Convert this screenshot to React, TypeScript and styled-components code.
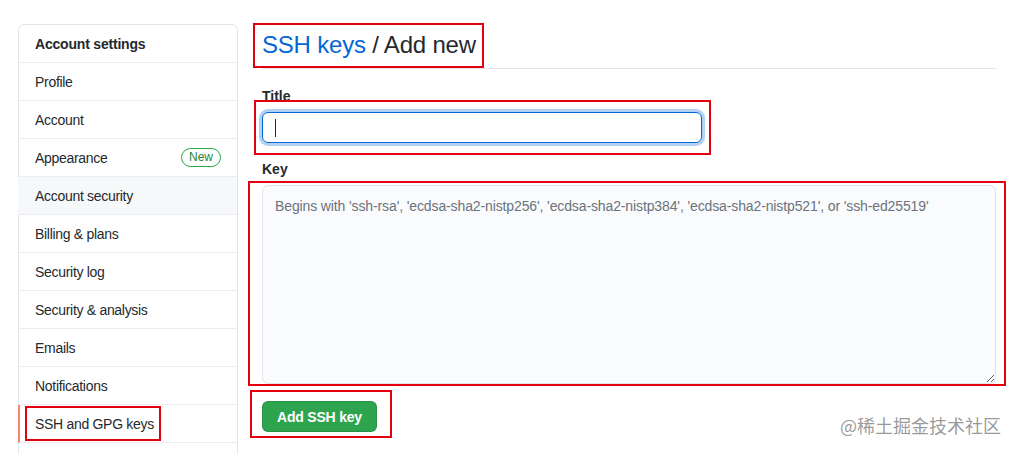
import React from "react";
import styled, { createGlobalStyle } from "styled-components";

const GlobalStyle = createGlobalStyle`
  html, body {
    margin: 0;
    padding: 0;
    background: #fff;
  }
  body {
    font-family: "Liberation Sans", Arial, sans-serif;
    font-size: 14px;
    color: #24292e;
  }
`;

const Page = styled.div`
  position: relative;
  width: 1016px;
  height: 454px;
  overflow: hidden;
  display: flex;
  align-items: flex-start;
  gap: 24px;
  padding: 24px 0 0 18px;
  box-sizing: border-box;
`;

const Menu = styled.nav`
  width: 220px;
  flex-shrink: 0;
  display: flex;
  flex-direction: column;
  padding-bottom: 24px;
  border: 1px solid #e1e4e8;
  border-radius: 6px;
  box-sizing: border-box;
`;

const MenuItem = styled.div<{ $heading?: boolean; $selected?: boolean; $hover?: boolean }>`
  display: flex;
  align-items: center;
  justify-content: space-between;
  height: 37px;
  padding: 0 16px 0 15px;
  border-bottom: 1px solid #eaecef;
  border-left: 2px solid ${(p) => (p.$selected ? "#f9826c" : "transparent")};
  margin-left: -1px;
  font-weight: ${(p) => (p.$heading ? 700 : 400)};
  letter-spacing: ${(p) => (p.$heading ? "-0.2px" : "-0.3px")};
  background: ${(p) => (p.$hover ? "#f6f8fa" : "transparent")};
  color: #24292e;
`;

const Badge = styled.span`
  border: 1px solid #28a745;
  color: #22863a;
  border-radius: 2em;
  font-size: 12px;
  line-height: 17px;
  padding: 0 7px;
  letter-spacing: 0;
`;

const Main = styled.main`
  width: 734px;
  flex-shrink: 0;
  display: flex;
  flex-direction: column;
  align-items: flex-start;
`;

const Heading = styled.h2`
  align-self: stretch;
  margin: 3px 0 0;
  padding-bottom: 5px;
  font-size: 24px;
  font-weight: 400;
  line-height: 36px;
  letter-spacing: -0.2px;
  border-bottom: 1px solid #e1e4e8;
  color: #24292e;
`;

const Crumb = styled.a`
  color: #0366d6;
  text-decoration: none;
`;

const Label = styled.div<{ $gap: number }>`
  font-weight: 700;
  line-height: 20px;
  margin: ${(p) => p.$gap}px 0 6px;
`;

const TitleInput = styled.div`
  width: 440px;
  height: 31px;
  box-sizing: border-box;
  border: 1px solid #0366d6;
  border-radius: 6px;
  box-shadow: 0 0 0 3px rgba(3, 102, 214, 0.3);
  display: flex;
  align-items: center;
  padding-left: 12px;
`;

const Caret = styled.span`
  width: 1px;
  height: 18px;
  background: #24292e;
`;

const KeyArea = styled.textarea`
  display: block;
  align-self: stretch;
  height: 199px;
  box-sizing: border-box;
  margin: 0;
  padding: 10px 12px;
  background: #fafbfc;
  border: 1px solid #e1e4e8;
  border-radius: 6px;
  font-family: "Liberation Sans", Arial, sans-serif;
  font-size: 14px;
  line-height: 20px;
  letter-spacing: -0.12px;
  color: #24292e;
  outline: none;
  &::placeholder {
    color: #6a737d;
  }
`;

const SubmitButton = styled.button`
  margin-top: 17px;
  height: 31px;
  padding: 0 14px;
  background: #2ea44f;
  border: 1px solid rgba(27, 31, 35, 0.15);
  border-radius: 6px;
  color: #fff;
  font-family: "Liberation Sans", Arial, sans-serif;
  font-size: 14px;
  font-weight: 700;
  letter-spacing: -0.2px;
`;

const Mark = styled.div<{ $x: number; $y: number; $w: number; $h: number }>`
  position: absolute;
  left: ${(p) => p.$x}px;
  top: ${(p) => p.$y}px;
  width: ${(p) => p.$w}px;
  height: ${(p) => p.$h}px;
  border: 2px solid #e3000f;
  box-sizing: border-box;
  pointer-events: none;
`;

const Watermark = styled.div`
  position: absolute;
  right: 15px;
  bottom: 16px;
  font-family: "Noto Sans CJK SC", sans-serif;
  font-size: 18px;
  color: rgba(120, 120, 120, 0.75);
`;

const items = [
  "Profile",
  "Account",
  "Appearance",
  "Account security",
  "Billing & plans",
  "Security log",
  "Security & analysis",
  "Emails",
  "Notifications",
  "SSH and GPG keys",
];

export default function App() {
  return (
    <>
      <GlobalStyle />
      <Page>
        <Menu>
          <MenuItem $heading>Account settings</MenuItem>
          {items.map((name) => (
            <MenuItem
              key={name}
              $hover={name === "Account security"}
              $selected={name === "SSH and GPG keys"}
            >
              {name}
              {name === "Appearance" && <Badge>New</Badge>}
            </MenuItem>
          ))}
        </Menu>

        <Main>
          <Heading>
            <Crumb href="#">SSH keys</Crumb> / Add new
          </Heading>
          <Label $gap={17}>Title</Label>
          <TitleInput>
            <Caret />
          </TitleInput>
          <Label $gap={16}>Key</Label>
          <KeyArea placeholder="Begins with 'ssh-rsa', 'ecdsa-sha2-nistp256', 'ecdsa-sha2-nistp384', 'ecdsa-sha2-nistp521', or 'ssh-ed25519'" />
          <SubmitButton>Add SSH key</SubmitButton>
        </Main>

        {/* red annotation boxes drawn over the screenshot */}
        <Mark $x={253} $y={23} $w={231} $h={45} />
        <Mark $x={254} $y={100} $w={457} $h={55} />
        <Mark $x={248} $y={181} $w={758} $h={205} />
        <Mark $x={250} $y={390} $w={142} $h={48} />
        <Mark $x={25} $y={406} $w={136} $h={35} />
        <Watermark>@稀土掘金技术社区</Watermark>
      </Page>
    </>
  );
}
